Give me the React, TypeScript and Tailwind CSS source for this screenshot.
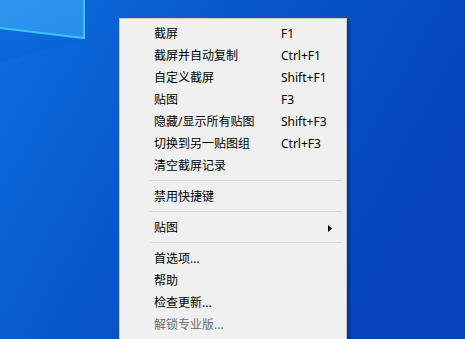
import React from 'react';

type Item =
  | { kind: 'item'; label: string; shortcut?: string; submenu?: boolean; disabled?: boolean }
  | { kind: 'sep' };

const items: Item[] = [
  { kind: 'item', label: '截屏', shortcut: 'F1' },
  { kind: 'item', label: '截屏并自动复制', shortcut: 'Ctrl+F1' },
  { kind: 'item', label: '自定义截屏', shortcut: 'Shift+F1' },
  { kind: 'item', label: '贴图', shortcut: 'F3' },
  { kind: 'item', label: '隐藏/显示所有贴图', shortcut: 'Shift+F3' },
  { kind: 'item', label: '切换到另一贴图组', shortcut: 'Ctrl+F3' },
  { kind: 'item', label: '清空截屏记录' },
  { kind: 'sep' },
  { kind: 'item', label: '禁用快捷键' },
  { kind: 'sep' },
  { kind: 'item', label: '贴图', submenu: true },
  { kind: 'sep' },
  { kind: 'item', label: '首选项...' },
  { kind: 'item', label: '帮助' },
  { kind: 'item', label: '检查更新...' },
  { kind: 'item', label: '解锁专业版...', disabled: true },
];

const Wallpaper = () => (
  <svg className="absolute inset-0" width="465" height="339" viewBox="0 0 465 339">
    <defs>
      <linearGradient id="desk" x1="0" y1="0" x2="1" y2="0.4">
        <stop offset="0" stopColor="#0d6fe0" />
        <stop offset="0.45" stopColor="#0857cc" />
        <stop offset="1" stopColor="#0644bb" />
      </linearGradient>
      <linearGradient id="pane" x1="0" y1="0" x2="1" y2="1">
        <stop offset="0" stopColor="#2f95f0" />
        <stop offset="1" stopColor="#2a8cec" />
      </linearGradient>
    </defs>
    <rect width="465" height="339" fill="url(#desk)" />
    <polygon points="0,40 84,40 0,62" fill="#0a62d6" opacity="0.6" />
    <polygon points="0,0 84,0 84,38 0,28" fill="url(#pane)" />
    <polyline points="0,28 84,38 84,0" fill="none" stroke="#3cc4f7" strokeWidth="2" />
  </svg>
);

export default function App() {
  return (
    <div className="relative w-[465px] h-[339px] overflow-hidden bg-[#0a58cc]">
      <Wallpaper />
      <div
        className="absolute left-[119px] top-[18px] w-[228px] h-[340px] bg-[#f0f0f0] border border-[#cccccc] pt-[3px] shadow-[2px_2px_3px_rgba(0,0,0,0.35)] text-[12px] text-black"
        style={{ fontFamily: '"Noto Sans", "Noto Sans CJK SC", sans-serif' }}
      >
        {items.map((it, i) =>
          it.kind === 'sep' ? (
            <div key={i} className="h-[9px] pt-[4px] pl-[30px] pr-[4px]">
              <div className="h-px bg-[#d7d7d7]" />
            </div>
          ) : (
            <div
              key={i}
              className={`flex items-center h-[22px] pt-[2px] pl-[34px] pr-[14px] leading-none ${it.disabled ? 'text-[#6d6d6d]' : ''}`}
            >
              <span className="w-[127px] whitespace-nowrap">{it.label}</span>
              <span className="flex-1 whitespace-nowrap">{it.shortcut}</span>
              {it.submenu && (
                <svg width="4" height="7" viewBox="0 0 4 7">
                  <polygon points="0,0 4,3.5 0,7" fill="#000" />
                </svg>
              )}
            </div>
          )
        )}
      </div>
    </div>
  );
}
